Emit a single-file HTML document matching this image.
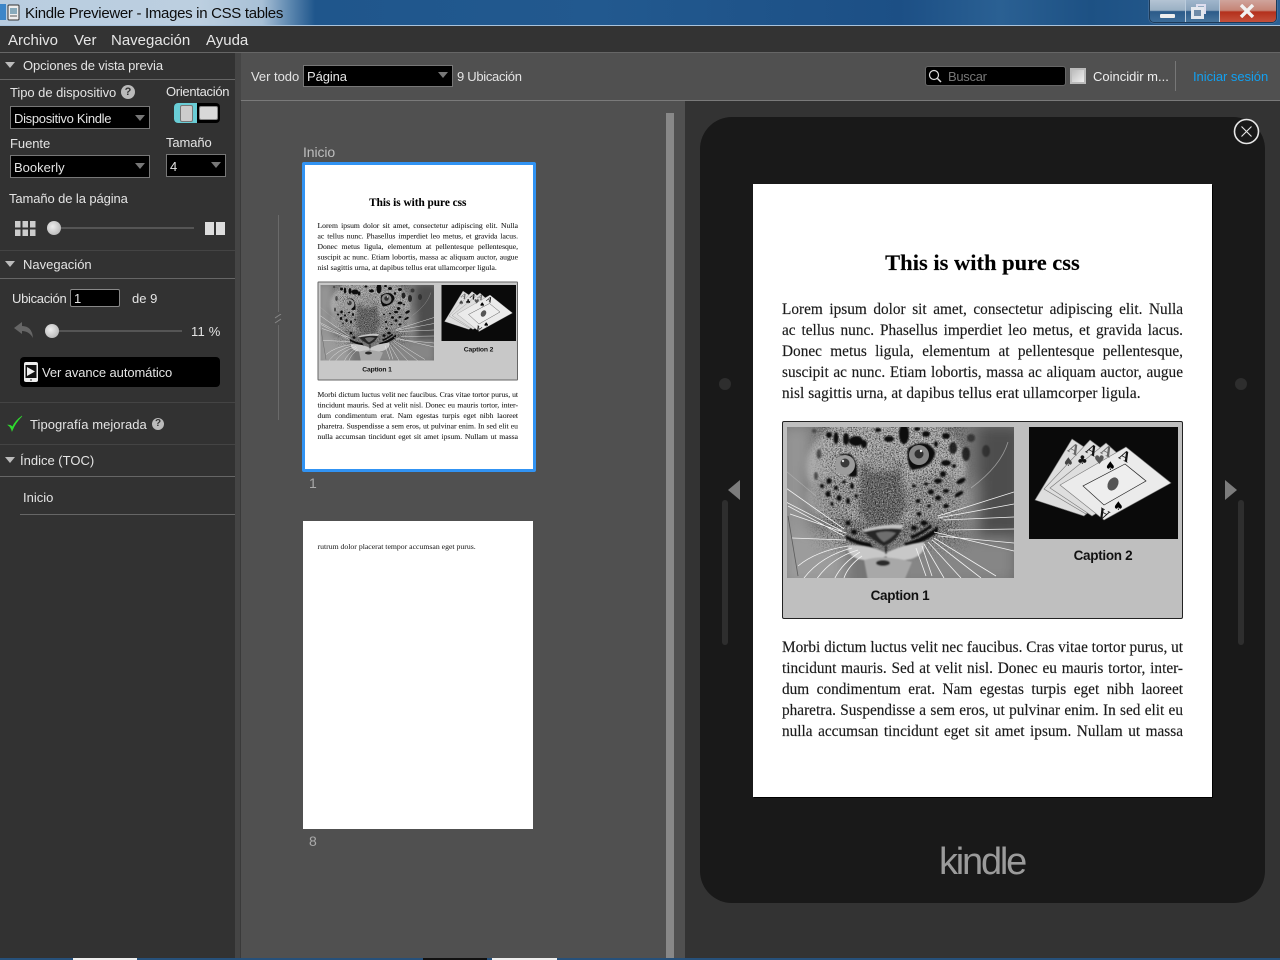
<!DOCTYPE html>
<html lang="es"><head><meta charset="utf-8"><title>Kindle Previewer</title>
<style>
html,body{margin:0;padding:0;width:1280px;height:960px;overflow:hidden;background:#333}
body{position:relative;font-family:"Liberation Sans",sans-serif}
.a{position:absolute}
.t{position:absolute;white-space:nowrap;line-height:16px;font-size:13px;color:#e4e4e4}
.l{position:absolute;left:0;width:235px;height:1px;background:#666}
.sel{position:absolute;background:#000;border:1px solid #777;box-sizing:border-box}
.arr{position:absolute;width:0;height:0;border-left:5px solid transparent;border-right:5px solid transparent;border-top:6px solid #777}
.tri{position:absolute;left:5px;width:0;height:0;border-left:5px solid transparent;border-right:5px solid transparent;border-top:6px solid #bbb}
.q{position:absolute;border-radius:50%;background:#bbb;color:#333;font-weight:bold;text-align:center}
.knob{position:absolute;width:14px;height:14px;border-radius:50%;background:radial-gradient(circle at 40% 40%,#eee,#aaa)}
.page{position:absolute;width:459px;height:613px;background:#fff;overflow:hidden;color:#1a1a1a;font-family:"Liberation Serif",serif;-webkit-text-stroke:.15px #1a1a1a}
.page .h{position:absolute;left:0;width:459px;top:67px;text-align:center;font-weight:bold;font-size:22.5px;line-height:24px;color:#000}
.page .p{position:absolute;left:29px;width:401px;font-size:15.3px;line-height:21px;height:21px;white-space:nowrap;text-align:justify;text-align-last:justify}
.page .n{text-align-last:left;letter-spacing:.07px}
.box{position:absolute;left:29px;top:237px;width:401px;height:198px;box-sizing:border-box;background:#bfbfbf;border:1px solid #222;border-radius:2px;-webkit-text-stroke:0}
.cap{position:absolute;font:bold 13.5px/16px "Liberation Sans",sans-serif;letter-spacing:-.3px;color:#111;text-align:center;width:120px}
.thumb{transform:scale(.5);transform-origin:0 0;filter:blur(.3px)}
.thumb .box{background:#c8c8c8;border:2px solid #666}
</style></head><body>

<svg width="0" height="0" style="position:absolute"><defs>
<filter id="nd" filterUnits="userSpaceOnUse" x="0" y="0" width="232" height="156"><feGaussianBlur in="SourceAlpha" stdDeviation="8" result="m"/><feTurbulence type="fractalNoise" baseFrequency=".75" numOctaves="2" seed="4"/><feColorMatrix values="0 0 0 0 0 0 0 0 0 0 0 0 0 0 0 3 0 0 0 -1.300"/><feComposite in2="m" operator="in"/></filter>
<filter id="nw" filterUnits="userSpaceOnUse" x="0" y="0" width="232" height="156"><feGaussianBlur in="SourceAlpha" stdDeviation="8" result="m"/><feTurbulence type="fractalNoise" baseFrequency=".8" numOctaves="2" seed="11"/><feColorMatrix values="0 0 0 0 1 0 0 0 0 1 0 0 0 0 1 0 3 0 0 -1.400"/><feComposite in2="m" operator="in"/></filter>
<filter id="b3"><feGaussianBlur stdDeviation="3"/></filter>
<filter id="b6"><feGaussianBlur stdDeviation="7"/></filter>
<filter id="b1"><feGaussianBlur stdDeviation=".7"/></filter>
<symbol id="leo" viewBox="1 1 227 151" preserveAspectRatio="none">
<rect x="0" y="0" width="232" height="156" fill="#757575"/>
<g filter="url(#b6)"><rect x="-5" y="0" width="30" height="160" fill="#949494"/><rect x="192" y="0" width="45" height="160" fill="#4e4e4e"/><rect x="168" y="55" width="24" height="50" fill="#868686"/><rect x="110" y="112" width="120" height="45" fill="#868686"/><rect x="0" y="105" width="60" height="55" fill="#9c9c9c"/><rect x="22" y="40" width="12" height="50" fill="#5e5e5e"/></g>
<g filter="url(#b3)"><ellipse cx="100" cy="42" rx="80" ry="56" fill="#ababab"/><ellipse cx="45" cy="72" rx="26" ry="22" fill="#9a9a9a"/><ellipse cx="150" cy="72" rx="33" ry="24" fill="#949494"/><path d="M74 40 Q95 30 115 36 L120 80 Q118 100 98 100 Q78 100 72 85Z" fill="#636363"/><path d="M85 24H108L112 45H82Z" fill="#a0a0a0"/></g>
<path d="M35 -20H175V120H35Z" fill="#000" filter="url(#nd)" opacity=".7"/>
<path d="M35 -20H175V120H35Z" fill="#fff" filter="url(#nw)" opacity=".5"/>
<g filter="url(#b1)" fill="#101010">
<ellipse cx="118" cy="8" rx="5" ry="10"/><ellipse cx="70" cy="15" rx="7" ry="5"/><ellipse cx="78" cy="18" rx="3" ry="4"/><ellipse cx="103" cy="13" rx="5" ry="3"/><ellipse cx="60" cy="13" rx="3" ry="6"/><ellipse cx="50" cy="12" rx="2.500" ry="6"/><ellipse cx="43" cy="9" rx="3" ry="3"/><ellipse cx="140" cy="8" rx="4" ry="3"/><ellipse cx="131" cy="3" rx="3" ry="2"/><ellipse cx="160" cy="10" rx="4" ry="3"/><ellipse cx="167" cy="22" rx="4" ry="6" opacity=".85"/><ellipse cx="180" cy="28" rx="4" ry="7" opacity=".8"/><ellipse cx="185" cy="12" rx="4" ry="4" opacity=".6"/><ellipse cx="160" cy="37" rx="5" ry="3"/><ellipse cx="33" cy="28" rx="2.500" ry="5" opacity=".6"/><ellipse cx="30" cy="50" rx="2" ry="4" opacity=".6"/><ellipse cx="92" cy="4" rx="3" ry="2"/><ellipse cx="28" cy="5" rx="2" ry="2" opacity=".5"/><ellipse cx="150" cy="18" rx="2" ry="3"/><ellipse cx="200" cy="25" rx="4" ry="6" opacity=".4"/>
<ellipse cx="157" cy="48" rx="3" ry="3"/><ellipse cx="152" cy="55" rx="4" ry="2.500"/><ellipse cx="175" cy="55" rx="5" ry="2.500" transform="rotate(-30 175 55)"/><ellipse cx="145" cy="66" rx="3" ry="2.500"/><ellipse cx="152" cy="72" rx="3" ry="2.500"/><ellipse cx="160" cy="65" rx="3" ry="2"/><ellipse cx="173" cy="68" rx="5" ry="2" transform="rotate(-30 173 68)"/><ellipse cx="132" cy="75" rx="2.500" ry="2"/><ellipse cx="160" cy="80" rx="3" ry="2"/><ellipse cx="133" cy="88" rx="2.500" ry="2"/><ellipse cx="140" cy="58" rx="2" ry="1.500"/><ellipse cx="128" cy="60" rx="2" ry="1.500"/><ellipse cx="168" cy="40" rx="2" ry="2"/><ellipse cx="143" cy="80" rx="2" ry="1.500"/>
<ellipse cx="43" cy="55" rx="2.500" ry="3"/><ellipse cx="53" cy="72" rx="2.500" ry="3"/><ellipse cx="42" cy="68" rx="2.500" ry="3"/><ellipse cx="62" cy="75" rx="2" ry="3"/><ellipse cx="66" cy="60" rx="2" ry="3"/><ellipse cx="50" cy="62" rx="2" ry="2"/><ellipse cx="36" cy="60" rx="2" ry="2"/><ellipse cx="58" cy="56" rx="2" ry="1.500"/><ellipse cx="46" cy="78" rx="1.500" ry="2"/><ellipse cx="70" cy="70" rx="1.500" ry="2"/>
<ellipse cx="138" cy="97" rx="3.500" ry="2.500"/><ellipse cx="128" cy="102" rx="3" ry="2.500"/><ellipse cx="62" cy="97" rx="2.500" ry="2.500"/><ellipse cx="68" cy="106" rx="3" ry="2.500"/>
<path d="M60 113 Q72 120 88 122 L84 117 Q70 115 60 109Z"/><path d="M118 117 Q136 113 152 100 L152 106 Q136 118 120 121Z"/><path d="M124 110 Q134 107 145 98 L146 101 Q134 110 126 113Z"/>
<path d="M39 36 Q50 27 64 28 Q72 34 71 50 Q66 52 62 50 Q72 38 54 29 Q44 31 39 36Z"/><path d="M122 22 Q132 15 142 18 Q150 24 149 28 Q146 40 132 43 L126 44 Q120 38 122 22Z"/>
</g>
<circle cx="59" cy="39" r="10" fill="#9c9c9c"/><circle cx="59" cy="37" r="4.500" fill="#3a3a3a"/><circle cx="133" cy="29" r="10" fill="#858585"/><circle cx="133" cy="28" r="4.500" fill="#303030"/><circle cx="135" cy="25" r="1.200" fill="#eee"/><circle cx="57" cy="35" r="1.200" fill="#ddd"/>
<g filter="url(#b1)"><path d="M76 104 Q98 97 118 99 Q116 104 108 106 Q86 106 80 106Z" fill="#c4c4c4"/><path d="M78 106 Q98 101 116 103 Q110 116 98 120 Q86 114 78 106Z" fill="#262626"/><path d="M90 107 Q100 104 110 107 Q104 113 98 116 Q92 112 90 107Z" fill="#6e6e6e"/><path d="M62 119 Q85 119 100 127 Q115 119 138 116 Q140 128 125 133 Q105 137 100 130 Q90 137 72 133 Q60 128 62 119Z" fill="#c8c8c8"/><path d="M78 134 Q100 128 126 136 L118 155 L82 155Z" fill="#a8a8a8"/><path d="M100 120 V128" stroke="#111" stroke-width="1.600"/><ellipse cx="97" cy="137" rx="7" ry="3" fill="#2a2a2a"/></g>
<g stroke="#f4f4f4" stroke-width=".8" fill="none">
<path d="M152 90L228 66M152 92L228 78M158 94L228 91M162 104L228 103M148 106L228 125M152 110L228 117M148 112L210 150M146 114L195 152M142 116L175 152M138 118L158 152M136 120L146 150M130 122L140 150"/>
<path d="M58 103L0 62M56 105L0 76M58 110L2 80M60 107L4 88M60 114L6 112M62 120Q30 125 12 140M66 122Q35 130 18 152M72 124Q45 132 30 154M74 126Q55 138 48 154M76 130Q62 140 58 152"/>
<path d="M185 62Q215 40 222 16" stroke="#bbb" opacity=".7"/><path d="M0 45L30 70" stroke="#bbb" opacity=".6"/><path d="M2 90L12 150" stroke="#333" opacity=".6"/>
</g>
</symbol>
</defs></svg>

<!-- title bar -->
<div class="a" style="left:0;top:0;width:1280px;height:25px;background:linear-gradient(90deg,#b9cde0 0,#bccfe0 200px,#a8c0d6 262px,#5c87af 290px,#1f568c 315px,#22598f 600px,#1c4f85 900px,#2a6093 1000px,#1d5184 1090px,#2b6195 1280px)"></div>
<div class="a" style="left:0;top:25px;width:1280px;height:1px;background:#a9c3dc"></div>
<div class="a" style="left:0;top:4px;width:6px;height:16px;background:#3d86c8"></div>
<svg class="a" style="left:6px;top:4px" width="15" height="17"><rect x="2" y="1" width="11" height="15" rx="1" fill="#eee" stroke="#333"/><rect x="4" y="4" width="7" height="6" fill="#8ab"/><path d="M4 12h7" stroke="#555"/></svg>
<div class="t" style="left:25px;top:6px;font-size:15px;letter-spacing:-.31px;color:#0c0c0c">Kindle Previewer - Images in CSS tables</div>
<div class="a" style="left:1149px;top:-1px;width:128px;height:24px;box-sizing:border-box;border:1px solid #1c3a58;border-radius:0 0 5px 5px;overflow:hidden;box-shadow:0 0 1px #ccd">
<div class="a" style="left:0;top:0;width:35px;height:23px;background:linear-gradient(#b4c4d4 0,#9ab0c4 45%,#2c5b89 50%,#3e6e9a 100%);border-right:1px solid #bcd"></div>
<div class="a" style="left:36px;top:0;width:33px;height:23px;background:linear-gradient(#a0b6cc 0,#87a1ba 45%,#2c5b89 50%,#4b789f 100%);border-right:1px solid #bcd"></div>
<div class="a" style="left:70px;top:0;width:57px;height:23px;background:linear-gradient(#d0a49c 0,#c58476 45%,#b4301c 52%,#c5543f 100%)"></div>
<div class="a" style="left:10px;top:14px;width:15px;height:4px;background:#eee;border-radius:1px"></div>
<div class="a" style="left:46px;top:4px;width:10px;height:10px;border:2px solid #dde;box-sizing:border-box"></div>
<div class="a" style="left:41px;top:7px;width:13px;height:12px;border:3px solid #e4e8ee;box-sizing:border-box;background:#6f8ba8"></div>
<svg class="a" style="left:89px;top:4px" width="16" height="14"><path d="M2 1L14 13M14 1L2 13" stroke="#f2f2f2" stroke-width="3.4"/></svg>
</div>

<!-- menu -->
<div class="a" style="left:0;top:26px;width:1280px;height:26px;background:#333"></div>
<div class="a" style="left:0;top:52px;width:1280px;height:1px;background:#666"></div>
<div class="t" style="left:8px;top:33px;font-size:15px;color:#e6e6e6">Archivo</div>
<div class="t" style="left:74px;top:33px;font-size:15px;color:#e6e6e6">Ver</div>
<div class="t" style="left:111px;top:33px;font-size:15px;color:#e6e6e6">Navegación</div>
<div class="t" style="left:206px;top:33px;font-size:15px;color:#e6e6e6">Ayuda</div>

<!-- column backgrounds -->
<div class="a" style="left:0;top:53px;width:235px;height:905px;background:#323232"></div>
<div class="a" style="left:235px;top:53px;width:6px;height:905px;background:#454545"></div>
<div class="a" style="left:240px;top:101px;width:1px;height:857px;background:#3a3a3a"></div>
<div class="a" style="left:241px;top:53px;width:1039px;height:47px;background:#505050"></div>
<div class="a" style="left:241px;top:100px;width:1039px;height:1px;background:#7a7a7a"></div>
<div class="a" style="left:241px;top:101px;width:444px;height:857px;background:#505050"></div>
<div class="a" style="left:685px;top:101px;width:595px;height:857px;background:#333"></div>
<div class="a" style="left:666px;top:113px;width:8px;height:845px;background:#888"></div>
<div class="a" style="left:0;top:958px;width:1280px;height:2px;background:#26507a"></div>
<div class="a" style="left:73px;top:958px;width:64px;height:2px;background:#eee"></div>
<div class="a" style="left:423px;top:958px;width:64px;height:2px;background:#111"></div>
<div class="a" style="left:492px;top:958px;width:65px;height:2px;background:#eee"></div>

<!-- sidebar -->
<div class="tri" style="top:62px"></div>
<div class="t" style="left:23px;top:58px;letter-spacing:-.1px">Opciones de vista previa</div>
<div class="l" style="top:79px"></div>
<div class="t" style="left:10px;top:85px;letter-spacing:-.05px">Tipo de dispositivo</div>
<div class="q" style="left:121px;top:85px;width:14px;height:14px;font-size:11px;line-height:14px">?</div>
<div class="t" style="left:166px;top:84px;letter-spacing:-.3px">Orientación</div>
<div class="a" style="left:174px;top:103px;width:46px;height:20px;background:#000;border-radius:4px"></div>
<div class="a" style="left:174px;top:103px;width:23px;height:20px;background:#69cdd6;border-radius:4px 0 0 4px"></div>
<div class="a" style="left:180px;top:105px;width:13px;height:17px;background:#ccc;border:1px solid #777;box-sizing:border-box;border-radius:2px"></div>
<div class="a" style="left:199px;top:106px;width:19px;height:14px;background:#d8d8d8;border:1px solid #888;box-sizing:border-box;border-radius:2px"></div>

<div class="sel" style="left:10px;top:106px;width:140px;height:23px"></div>
<div class="t" style="left:14px;top:111px;letter-spacing:-.3px">Dispositivo Kindle</div>
<div class="arr" style="left:135px;top:115px"></div>
<div class="t" style="left:10px;top:136px;letter-spacing:-.05px">Fuente</div>
<div class="t" style="left:166px;top:135px;letter-spacing:-.1px">Tamaño</div>
<div class="sel" style="left:10px;top:155px;width:140px;height:23px"></div>
<div class="t" style="left:14px;top:160px">Bookerly</div>
<div class="arr" style="left:135px;top:163px"></div>
<div class="sel" style="left:166px;top:154px;width:60px;height:23px"></div>
<div class="t" style="left:170px;top:159px">4</div>
<div class="arr" style="left:211px;top:162px"></div>
<div class="t" style="left:9px;top:191px;letter-spacing:-.1px">Tamaño de la página</div>

<svg class="a" style="left:15px;top:221px" width="21" height="15" fill="#ccc"><rect width="5.500" height="6.500"/><rect x="7.500" width="5.500" height="6.500"/><rect x="15" width="5.500" height="6.500"/><rect y="8.500" width="5.500" height="6.500"/><rect x="7.500" y="8.500" width="5.500" height="6.500"/><rect x="15" y="8.500" width="5.500" height="6.500"/></svg>
<div class="a" style="left:54px;top:227px;width:140px;height:2px;background:#555"></div>
<div class="knob" style="left:47px;top:221px"></div>
<div class="a" style="left:205px;top:222px;width:9px;height:13px;background:#ddd"></div>
<div class="a" style="left:216px;top:222px;width:9px;height:13px;background:#ddd"></div>

<div class="l" style="top:250px;background:#444"></div>
<div class="tri" style="top:261px"></div>
<div class="t" style="left:23px;top:257px">Navegación</div>
<div class="l" style="top:278px"></div>
<div class="t" style="left:12px;top:291px;letter-spacing:-.3px">Ubicación</div>
<div class="a" style="left:70px;top:289px;width:50px;height:18px;background:#000;border:1px solid #888;box-sizing:border-box;border-radius:2px"></div>
<div class="t" style="left:74px;top:291px">1</div>
<div class="t" style="left:132px;top:291px">de 9</div>
<svg class="a" style="left:14px;top:322px" width="20" height="17"><path d="M0 6L8 0V4Q18 4 19 16Q15 9 8 9V12Z" fill="#666"/></svg>
<div class="a" style="left:52px;top:330px;width:130px;height:2px;background:#555"></div>
<div class="knob" style="left:45px;top:324px"></div>
<div class="t" style="left:191px;top:324px;letter-spacing:.2px">11 %</div>
<div class="a" style="left:20px;top:357px;width:200px;height:30px;background:#000;border-radius:4px"></div>
<svg class="a" style="left:24px;top:362px" width="14" height="20"><rect width="14" height="20" rx="2" fill="#eee"/><rect x="1.500" y="3" width="11" height="13" fill="#111"/><path d="M3 5L11 9.500L3 14Z" fill="#eee"/><circle cx="7" cy="18" r="1" fill="#666"/></svg>
<div class="t" style="left:42px;top:365px;letter-spacing:-.1px">Ver avance automático</div>
<div class="l" style="top:402px;background:#444"></div>
<svg class="a" style="left:7px;top:415px" width="16" height="17"><path d="M1 10Q4 12 5 16Q8 8 15 1Q8 6 5.500 12Q4 10 1 10Z" fill="#2fdc2f" stroke="#2fdc2f" stroke-width=".6"/></svg>
<div class="t" style="left:30px;top:417px;letter-spacing:.05px">Tipografía mejorada</div>
<div class="q" style="left:152px;top:418px;width:12px;height:12px;font-size:10px;line-height:12px">?</div>
<div class="l" style="top:444px;background:#444"></div>
<div class="tri" style="top:457px"></div>
<div class="t" style="left:20px;top:453px">Índice (TOC)</div>
<div class="l" style="top:476px"></div>
<div class="t" style="left:23px;top:490px">Inicio</div>
<div class="l" style="top:514px;left:20px;width:215px"></div>

<!-- toolbar -->
<div class="t" style="left:251px;top:69px;letter-spacing:-.03px">Ver todo</div>
<div class="sel" style="left:303px;top:65px;width:150px;height:22px"></div>
<div class="t" style="left:307px;top:69px;letter-spacing:-.1px">Página</div>
<div class="arr" style="left:438px;top:72px"></div>
<div class="t" style="left:457px;top:69px;letter-spacing:-.3px">9 Ubicación</div>
<div class="a" style="left:925px;top:66px;width:141px;height:20px;background:#000;border:1px solid #666;box-sizing:border-box;border-radius:3px"></div>
<svg class="a" style="left:928px;top:69px" width="14" height="14" fill="none" stroke="#ddd"><circle cx="6" cy="6" r="4.500" stroke-width="1.200"/><path d="M9.500 9.500L13 13" stroke-width="1.500"/></svg>
<div class="t" style="left:948px;top:69px;letter-spacing:-.3px;color:#777">Buscar</div>
<div class="a" style="left:1070px;top:68px;width:16px;height:16px;box-sizing:border-box;border:2px solid #bbb;background:linear-gradient(135deg,#bbb,#f0f0f0)"></div>
<div class="t" style="left:1093px;top:69px;color:#eee">Coincidir m...</div>
<div class="a" style="left:1175px;top:61px;width:1px;height:30px;background:#777"></div>
<div class="t" style="left:1193px;top:69px;letter-spacing:-.05px;color:#12a0f0">Iniciar sesión</div>

<!-- thumbnails column -->
<div class="a" style="left:278px;top:215px;width:1px;height:97px;background:#6a6a6a"></div>
<div class="a" style="left:278px;top:325px;width:1px;height:95px;background:#6a6a6a"></div>
<svg class="a" style="left:274px;top:314px" width="9" height="10" stroke="#888" fill="none"><path d="M1 4L7 0M1 9L7 5"/></svg>
<div class="t" style="left:303px;top:144px;font-size:14px;letter-spacing:-.1px;color:#bdbdbd">Inicio</div>
<div class="a" style="left:302px;top:162px;width:234px;height:310px;box-sizing:border-box;border:3px solid #3193f3;border-radius:2px;background:#fff"></div>

<div class="page thumb" style="left:305px;top:165px;width:456px;height:606px;overflow:visible;background:transparent">
<div style="position:absolute;left:-4px;top:-4px;width:459px;height:606px">
<div class="h">This is with pure css</div>
<div class="p" style="top:115px">Lorem ipsum dolor sit amet, consectetur adipiscing elit. Nulla</div>
<div class="p" style="top:136px">ac tellus nunc. Phasellus imperdiet leo metus, et gravida lacus.</div>
<div class="p" style="top:157px">Donec metus ligula, elementum at pellentesque pellentesque,</div>
<div class="p" style="top:178px">suscipit ac nunc. Etiam lobortis, massa ac aliquam auctor, augue</div>
<div class="p n" style="top:199px">nisl sagittis urna, at dapibus tellus erat ullamcorper ligula.</div>
<div class="box">
<svg class="a" style="left:4px;top:5px" width="227" height="151"><use href="#leo"/></svg>
<svg class="a" style="left:246px;top:5px" width="149" height="112" viewBox="1 1 149 112" font-family="Liberation Serif,serif"><rect width="152" height="115" fill="#0a0a0a"/><g stroke="#777" stroke-width=".6" fill="#dedede"><polygon points="44,13 100,50 56,90 7,74"/><polygon points="62,14 110,50 58,88 16,63"/><polygon points="78,17 120,55 64,90 22,62"/><polygon points="98,21 143,57 76,94 32,59" fill="#ebebeb"/></g><polygon points="97,38 118,55 76,79 55,60" fill="#eee" stroke="#222" stroke-width=".7"/><ellipse cx="85" cy="58" rx="5" ry="7" fill="#555" transform="rotate(30 85 58)"/><g font-size="15" font-weight="bold"><text x="40" y="28" fill="#666" transform="rotate(28 46 24)">A</text><text x="58" y="29" fill="#111" transform="rotate(28 64 25)">A</text><text x="73" y="30" fill="#666" transform="rotate(28 79 26)">A</text><text x="91" y="35" fill="#111" transform="rotate(28 97 31)">A</text><text x="69" y="93" fill="#111" transform="rotate(208 75 88)">A</text></g><g font-family="DejaVu Sans,sans-serif" font-size="12"><text x="35" y="40" fill="#444">♠</text><text x="49" y="38" fill="#111">♣</text><text x="66" y="38" fill="#555">♥</text><text x="77" y="44" fill="#000">♠</text><text x="85" y="84" fill="#000">♠</text></g></svg>
<div class="cap" style="left:57px;top:166px">Caption 1</div>
<div class="cap" style="left:260px;top:126px">Caption 2</div>
</div>
<div class="p" style="top:453px">Morbi dictum luctus velit nec faucibus. Cras vitae tortor purus, ut</div>
<div class="p" style="top:474px">tincidunt mauris. Sed at velit nisl. Donec eu mauris tortor, inter-</div>
<div class="p" style="top:495px">dum condimentum erat. Nam egestas turpis eget nibh laoreet</div>
<div class="p" style="top:516px">pharetra. Suspendisse a sem eros, ut pulvinar enim. In sed elit eu</div>
<div class="p" style="top:537px">nulla accumsan tincidunt eget sit amet ipsum. Nullam ut massa</div>
</div></div>

<div class="t" style="left:309px;top:475px;font-size:14px;color:#aaa">1</div>
<div class="a" style="left:303px;top:521px;width:230px;height:308px;background:#fff"></div>
<div class="t" style="left:317.500px;top:539px;font:7.750px/16px 'Liberation Serif',serif;color:#111;filter:blur(.2px)">rutrum dolor placerat tempor accumsan eget purus.</div>
<div class="t" style="left:309px;top:833px;font-size:14px;color:#aaa">8</div>

<!-- device -->
<div class="a" style="left:700px;top:117px;width:565px;height:786px;background:#191919;border-radius:32px"></div>
<svg class="a" style="left:1233px;top:118px" width="27" height="27" fill="none" stroke="#e6e6e6"><circle cx="13.500" cy="13.500" r="12" stroke-width="1.600" fill="#191919"/><path d="M8.500 8.500L18.500 18.500M18.500 8.500L8.500 18.500" stroke-width="1.100"/></svg>
<div class="a" style="left:719px;top:378px;width:12px;height:12px;border-radius:50%;background:#2e2e2e"></div>
<div class="a" style="left:1235px;top:378px;width:12px;height:12px;border-radius:50%;background:#2e2e2e"></div>
<div class="a" style="left:722px;top:500px;width:6px;height:145px;border-radius:3px;background:#2e2e2e"></div>
<div class="a" style="left:1238px;top:500px;width:6px;height:145px;border-radius:3px;background:#2e2e2e"></div>
<svg class="a" style="left:728px;top:480px" width="12" height="20"><path d="M12 0V20L0 10Z" fill="#7c7c7c"/></svg>
<svg class="a" style="left:1225px;top:480px" width="12" height="20"><path d="M0 0V20L12 10Z" fill="#7c7c7c"/></svg>
<div class="t" style="left:939px;top:841px;font-size:38px;line-height:42px;letter-spacing:-2.200px;color:#9b9b9b">kindle</div>

<div class="page" style="left:753px;top:184px;box-shadow:1px 1px 0 #000">
<div class="h">This is with pure css</div>
<div class="p" style="top:115px">Lorem ipsum dolor sit amet, consectetur adipiscing elit. Nulla</div>
<div class="p" style="top:136px">ac tellus nunc. Phasellus imperdiet leo metus, et gravida lacus.</div>
<div class="p" style="top:157px">Donec metus ligula, elementum at pellentesque pellentesque,</div>
<div class="p" style="top:178px">suscipit ac nunc. Etiam lobortis, massa ac aliquam auctor, augue</div>
<div class="p n" style="top:199px">nisl sagittis urna, at dapibus tellus erat ullamcorper ligula.</div>
<div class="box">
<svg class="a" style="left:4px;top:5px" width="227" height="151"><use href="#leo"/></svg>
<svg class="a" style="left:246px;top:5px" width="149" height="112" viewBox="1 1 149 112" font-family="Liberation Serif,serif"><rect width="152" height="115" fill="#0a0a0a"/><g stroke="#777" stroke-width=".6" fill="#dedede"><polygon points="44,13 100,50 56,90 7,74"/><polygon points="62,14 110,50 58,88 16,63"/><polygon points="78,17 120,55 64,90 22,62"/><polygon points="98,21 143,57 76,94 32,59" fill="#ebebeb"/></g><polygon points="97,38 118,55 76,79 55,60" fill="#eee" stroke="#222" stroke-width=".7"/><ellipse cx="85" cy="58" rx="5" ry="7" fill="#555" transform="rotate(30 85 58)"/><g font-size="15" font-weight="bold"><text x="40" y="28" fill="#666" transform="rotate(28 46 24)">A</text><text x="58" y="29" fill="#111" transform="rotate(28 64 25)">A</text><text x="73" y="30" fill="#666" transform="rotate(28 79 26)">A</text><text x="91" y="35" fill="#111" transform="rotate(28 97 31)">A</text><text x="69" y="93" fill="#111" transform="rotate(208 75 88)">A</text></g><g font-family="DejaVu Sans,sans-serif" font-size="12"><text x="35" y="40" fill="#444">♠</text><text x="49" y="38" fill="#111">♣</text><text x="66" y="38" fill="#555">♥</text><text x="77" y="44" fill="#000">♠</text><text x="85" y="84" fill="#000">♠</text></g></svg>
<div class="cap" style="left:57px;top:166px">Caption 1</div>
<div class="cap" style="left:260px;top:126px">Caption 2</div>
</div>
<div class="p" style="top:453px">Morbi dictum luctus velit nec faucibus. Cras vitae tortor purus, ut</div>
<div class="p" style="top:474px">tincidunt mauris. Sed at velit nisl. Donec eu mauris tortor, inter-</div>
<div class="p" style="top:495px">dum condimentum erat. Nam egestas turpis eget nibh laoreet</div>
<div class="p" style="top:516px">pharetra. Suspendisse a sem eros, ut pulvinar enim. In sed elit eu</div>
<div class="p" style="top:537px">nulla accumsan tincidunt eget sit amet ipsum. Nullam ut massa</div>
</div>

</body></html>
